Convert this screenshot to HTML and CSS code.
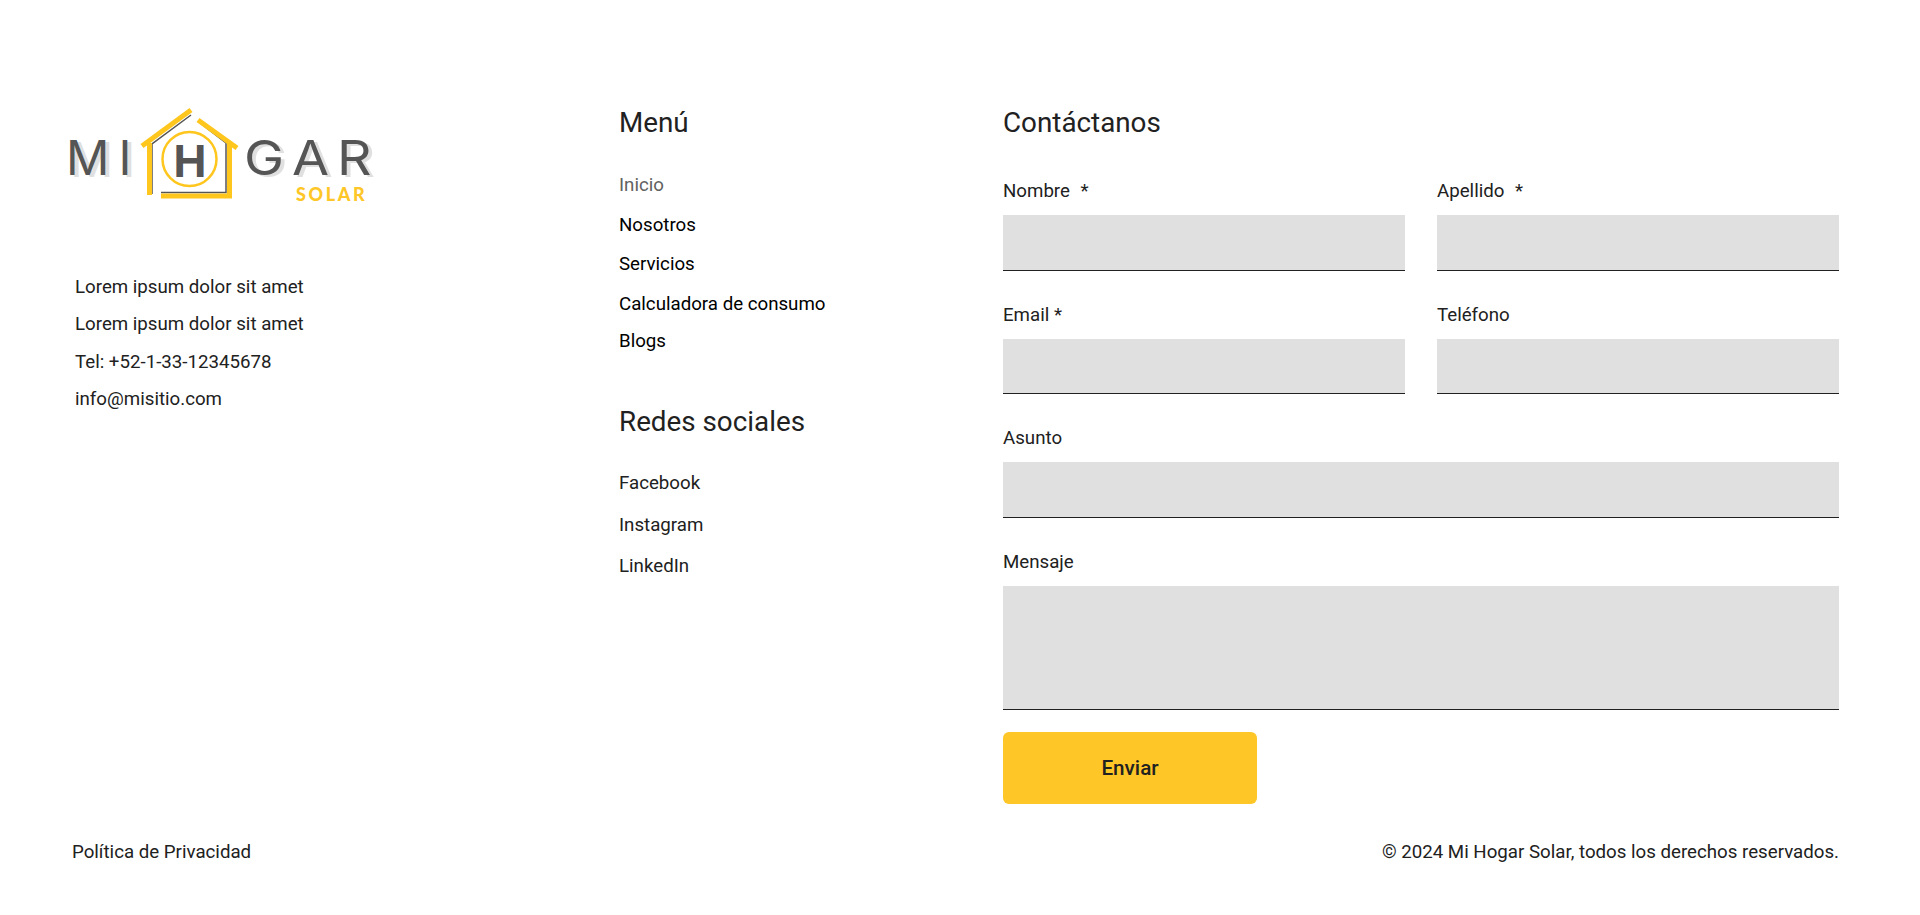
FILE: index.html
```html
<!DOCTYPE html>
<html lang="es">
<head>
<meta charset="utf-8">
<title>Mi Hogar Solar</title>
<link rel="stylesheet" href="styles.css">
</head>
<body>
<footer class="footer">
  <div class="columns">
    <section class="brand">
      <svg class="logo" viewBox="0 0 350 130" width="350" height="130" role="img" aria-label="Mi Hogar Solar">
        <g class="logo-shadow">
          <text x="20 72.5" y="87" class="logo-word">MI</text>
          <g transform="scale(1.12 1)"><text x="176.5 219.5 259.5" y="87" class="logo-word">GAR</text></g>
        </g>
        <text x="16 68.5" y="85" class="logo-word logo-dark">MI</text>
        <g transform="scale(1.12 1)"><text x="173.2 216 256.3" y="85" class="logo-word logo-dark">GAR</text></g>
        <text x="140" y="87" class="logo-h">H</text>
        <text x="246" y="111" class="logo-solar">SOLAR</text>
        <path class="house-dark" d="M102 104V54L141 25M150 33L176 53V102.5H111"/>
        <path class="house-yellow" d="M141 20L92 56M99.5 53V105M148 30L187 58M179.5 53V106H111"/>
        <circle class="house-ring" cx="139.5" cy="69" r="27"/>
      </svg>
      <ul class="address">
        <li>Lorem ipsum dolor sit amet</li>
        <li>Lorem ipsum dolor sit amet</li>
        <li>Tel: +52-1-33-12345678</li>
        <li>info@misitio.com</li>
      </ul>
    </section>
    <nav class="links">
      <h2 class="heading">Menú</h2>
      <ul class="menu">
        <li class="menu-muted">Inicio</li>
        <li>Nosotros</li>
        <li>Servicios</li>
        <li class="menu-tight">Calculadora de consumo</li>
        <li class="menu-last">Blogs</li>
      </ul>
      <h2 class="heading social-heading">Redes sociales</h2>
      <ul class="social">
        <li>Facebook</li>
        <li>Instagram</li>
        <li>LinkedIn</li>
      </ul>
    </nav>
    <form class="contact">
      <h2 class="heading">Contáctanos</h2>
      <div class="fields">
        <label class="field"><span class="field-label">Nombre <span class="star">*</span></span><input class="input" type="text"></label>
        <label class="field"><span class="field-label">Apellido <span class="star">*</span></span><input class="input" type="text"></label>
        <label class="field"><span class="field-label">Email *</span><input class="input" type="email"></label>
        <label class="field"><span class="field-label">Teléfono</span><input class="input" type="tel"></label>
        <label class="field field-wide"><span class="field-label">Asunto</span><input class="input" type="text"></label>
        <label class="field field-wide"><span class="field-label">Mensaje</span><textarea class="input textarea"></textarea></label>
      </div>
      <button class="submit" type="button">Enviar</button>
    </form>
  </div>
  <div class="legal">
    <span>Política de Privacidad</span>
    <span>© 2024 Mi Hogar Solar, todos los derechos reservados.</span>
  </div>
</footer>
</body>
</html>
```
FILE: styles.css
```css
* { box-sizing: border-box; }
html, body { margin: 0; padding: 0; background: #fff; }
body { font-family: Roboto, "Liberation Sans", sans-serif; color: #212121; font-size: 18.7px; }
ul { list-style: none; margin: 0; padding: 0; }
.footer { height: 915px; padding: 90px 81px 0 72px; }
.columns { display: grid; grid-template-columns: 547px 384px 836px; height: 714px; }
.brand { margin-left: -22px; }
.logo { display: block; }
.logo-word { font-family: Inter, sans-serif; font-size: 48px; font-weight: 400; }
.logo-shadow { fill: #e0e0e0; }
.logo-dark { fill: #555; }
.logo-h { font-family: Inter, sans-serif; font-size: 44px; font-weight: 700; fill: #555; text-anchor: middle; }
.logo-solar { font-family: Lato, sans-serif; font-size: 18px; font-weight: 900; letter-spacing: 2.6px; fill: #ffc627; }
.house-dark { fill: none; stroke: #555; stroke-width: 1.5; }
.house-yellow { fill: none; stroke: #ffc61e; stroke-width: 5; }
.house-ring { fill: none; stroke: #ffc61e; stroke-width: 2.5; }
.address { margin: 49px 0 0 25px; }
.address li { line-height: 37.3px; }
.links, .contact { padding-top: 13px; }
.heading { margin: 0; font-size: 27.8px; font-weight: 400; line-height: 40px; }
.links li { line-height: 24px; }
.menu { margin-top: 30px; color: #000; }
.menu li { margin-bottom: 15.5px; }
.menu .menu-muted { color: #616161; }
.menu .menu-tight { margin-bottom: 13.5px; }
.menu .menu-last { margin-bottom: 0; }
.social-heading { margin-top: 49px; }
.social { margin-top: 29px; }
.social li { margin-bottom: 17.5px; }
.fields { display: grid; grid-template-columns: 402px 402px; column-gap: 32px; row-gap: 32px; margin-top: 36px; }
.field { display: block; }
.field-wide { grid-column: 1 / -1; }
.field-label { display: block; line-height: 24px; height: 36px; }
.star { margin-left: 6px; }
.input { display: block; width: 100%; height: 55.5px; margin: 0; padding: 0; background: #e0e0e0; border: 0; border-bottom: 1px solid #212121; border-radius: 0; }
.textarea { height: 124px; resize: none; }
.submit { display: block; width: 254px; height: 72px; margin-top: 22.5px; background: #ffc627; border: 0; border-radius: 6px; font-family: inherit; font-size: 20.7px; font-weight: 500; color: #212121; }
.legal { display: flex; justify-content: space-between; align-items: center; line-height: 24px; margin-top: 36px; }
```
